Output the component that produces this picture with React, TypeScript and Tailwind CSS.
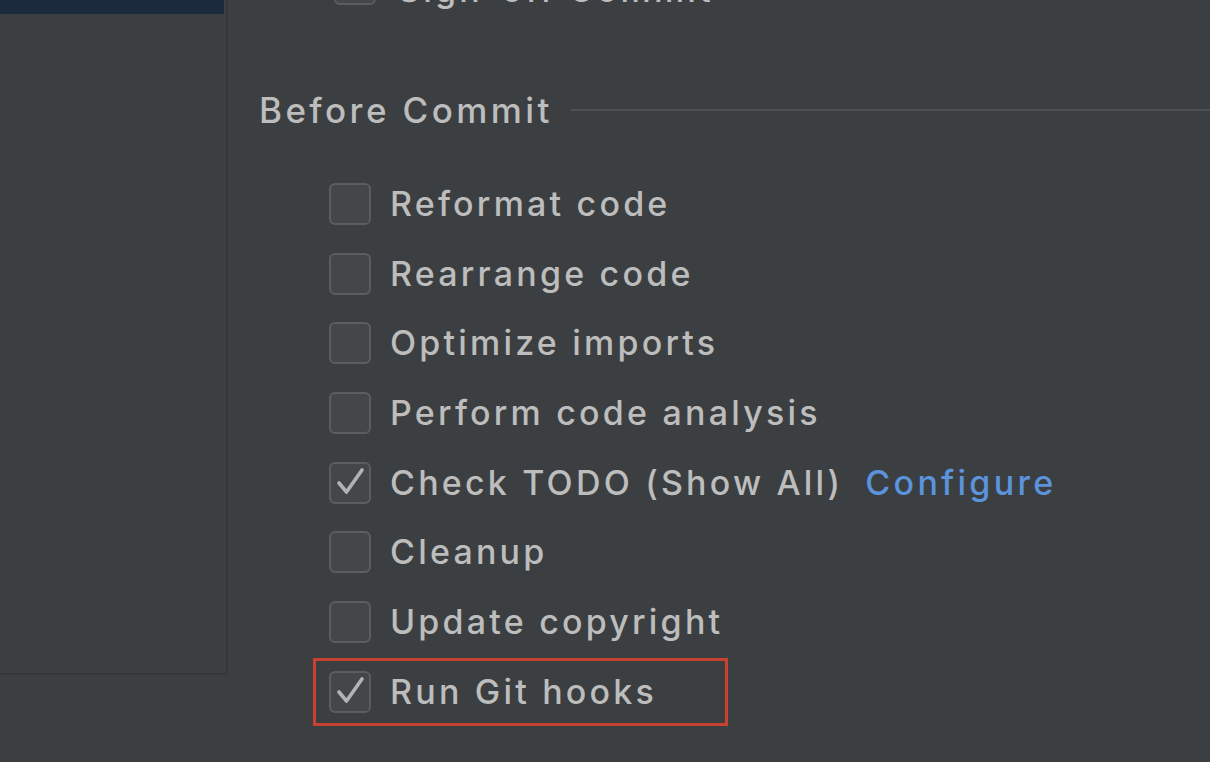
const font = { fontFamily: 'Inter, "Noto Sans", sans-serif' }

type Option = { label: string; checked?: boolean; link?: string; highlight?: boolean }

const options: Option[] = [
    { label: 'Reformat code' },
    { label: 'Rearrange code' },
    { label: 'Optimize imports' },
    { label: 'Perform code analysis' },
    { label: 'Check TODO (Show All)', checked: true, link: 'Configure' },
    { label: 'Cleanup' },
    { label: 'Update copyright' },
    { label: 'Run Git hooks', checked: true, highlight: true },
]

function Checkbox({ checked }: { checked?: boolean }) {
    return (
        <div className="w-[42px] h-[42px] shrink-0 rounded-[6px] border-2 border-[#5b5e5f] bg-[#43474a]">
            {checked && (
                <svg viewBox="0 0 42 42" className="-m-[2px]" style={{ width: 42, height: 42 }}>
                    <path d="M10 21 L17.5 30 L33 8" fill="none" stroke="#b3b3b3" strokeWidth="3.6" strokeLinecap="round" strokeLinejoin="round" />
                </svg>
            )}
        </div>
    )
}

function Row({ option }: { option: Option }) {
    const content = (
        <>
            <Checkbox checked={option.checked} />
            <span className="ml-[19px] text-[#bdbdbd] whitespace-nowrap">{option.label}</span>
            {option.link && <span className="ml-[22px] text-[#5b93dc] tracking-[3.3px] whitespace-nowrap">{option.link}</span>}
        </>
    )

    if (option.highlight) {
        return (
            <div className="h-[69.7px] flex items-center">
                <div className="ml-[85px] w-[415px] h-[68px] border-[3px] border-[#c9412f] flex items-center pl-[13px]">
                    {content}
                </div>
            </div>
        )
    }

    return <div className="h-[69.7px] flex items-center pl-[101px]">{content}</div>
}

export default function App() {
    return (
        <div className="w-[1210px] h-[762px] bg-[#3c3f41] flex overflow-hidden text-[34px] font-medium leading-none tracking-[3.2px]" style={font}>
            {/* Left settings tree */}
            <div className="w-[228px] h-[675px] shrink-0 border-r-2 border-b-2 border-[#343638]">
                <div className="h-[14px] w-[224px] bg-[#1c2a3d]" />
            </div>

            {/* Right panel */}
            <div className="flex-1 flex flex-col">
                <div className="-mt-[51px] h-[70px] flex items-center pl-[106px]">
                    <Checkbox />
                    <span className="ml-[22px] mt-[12px] text-[#bdbdbd] whitespace-nowrap">Sign-off Commit</span>
                </div>

                <div className="mt-[71px] h-[40px] flex items-center pl-[31px]">
                    <span className="text-[#bdbdbd] text-[35px] tracking-[3.4px] whitespace-nowrap">Before Commit</span>
                    <div className="ml-[18px] flex-1 h-[2px] bg-[#4d5052]" />
                </div>

                <div className="mt-[39px] flex flex-col">
                    {options.map((o) => (
                        <Row key={o.label} option={o} />
                    ))}
                </div>
            </div>
        </div>
    )
}
